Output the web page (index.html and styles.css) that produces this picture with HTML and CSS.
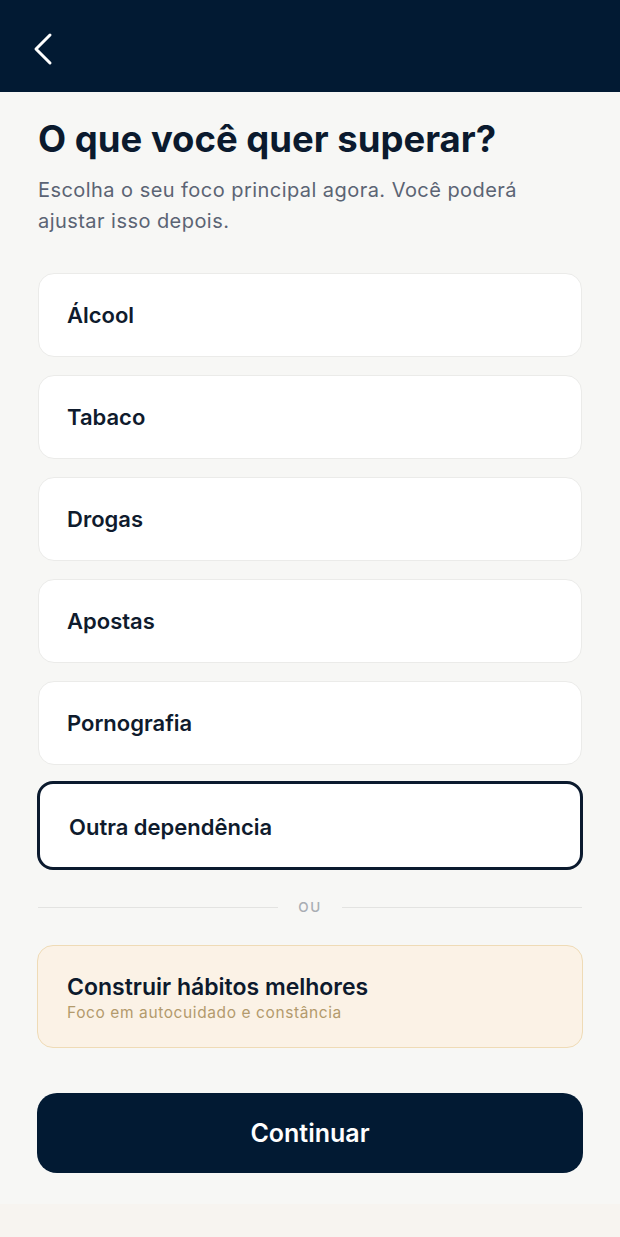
FILE: index.html
```html
<!DOCTYPE html>
<html lang="pt">
<head>
<meta charset="utf-8">
<title>O que você quer superar?</title>
<link rel="stylesheet" href="styles.css">
</head>
<body>
<header class="topbar">
  <button class="back" aria-label="Voltar">
    <svg width="24" height="34" viewBox="0 0 24 34"><path d="M18 3 L4 17 L18 31" fill="none" stroke="#fff" stroke-width="3" stroke-linecap="round" stroke-linejoin="round"/></svg>
  </button>
</header>
<main class="content">
  <h1 class="title">O que você quer superar?</h1>
  <p class="subtitle">Escolha o seu foco principal agora. Você poderá ajustar isso depois.</p>
  <div class="options">
    <div class="option">Álcool</div>
    <div class="option">Tabaco</div>
    <div class="option">Drogas</div>
    <div class="option">Apostas</div>
    <div class="option">Pornografia</div>
    <div class="option option-selected">Outra dependência</div>
  </div>
  <div class="divider"><span class="line"></span><span class="or">OU</span><span class="line"></span></div>
  <div class="habit">
    <div class="habit-title">Construir hábitos melhores</div>
    <div class="habit-sub">Foco em autocuidado e constância</div>
  </div>
  <button class="continue">Continuar</button>
</main>
<footer class="bottom"></footer>
</body>
</html>
```
FILE: styles.css
```css
* { box-sizing: border-box; }
html, body { margin: 0; padding: 0; }
body {
  background: #f7f7f5;
  font-family: Inter, "Noto Sans", sans-serif;
  color: #0d1a2d;
  width: 620px;
}
.topbar {
  height: 92px;
  background: #021a33;
  display: flex;
  align-items: center;
  padding-left: 32px;
}
.back {
  background: none;
  border: 0;
  padding: 0;
  display: flex;
  margin-top: 6px;
}
.content {
  padding: 0 37px;
  display: flex;
  flex-direction: column;
}
.title {
  margin: 25px 0 0 1px;
  font-size: 36.5px;
  line-height: 44px;
  font-weight: 700;
  color: #0b1a2e;
}
.subtitle {
  margin: 14px 0 0 1px;
  font-size: 20px;
  line-height: 31px;
  color: #5b6474;
  font-weight: 400;
  letter-spacing: 0.45px;
}
.options {
  margin-top: 36px;
  display: flex;
  flex-direction: column;
  gap: 18px;
}
.option {
  height: 84px;
  background: #fff;
  border: 1px solid #ebebe9;
  border-radius: 16px;
  padding: 0 28px;
  display: flex;
  align-items: center;
  font-size: 22px;
  font-weight: 600;
  color: #0f1b2d;
  margin: 0 1px;
}
.option-selected {
  height: 89px;
  border: 3px solid #0b1a2e;
  margin: -2px 0 0;
  padding-left: 29px;
  padding-top: 2px;
}
.divider {
  margin-top: 29px;
  display: flex;
  align-items: center;
  gap: 20px;
  padding: 0 1px;
}
.line {
  flex: 1;
  height: 1px;
  background: #e3e3e1;
}
.or {
  font-size: 13.5px;
  color: #a9adb3;
  letter-spacing: 1.5px;
  font-weight: 500;
}
.habit {
  margin-top: 30px;
  height: 103px;
  background: #fbf2e6;
  border: 1.5px solid #efdbb6;
  border-radius: 16px;
  padding: 27px 29px 0;
}
.habit-title {
  font-size: 23px;
  font-weight: 600;
  color: #0d1a2d;
  line-height: 28px;
}
.habit-sub {
  font-size: 15.5px;
  color: #b39a6c;
  line-height: 22px;
  margin-top: 1px;
  letter-spacing: 0.6px;
}
.continue {
  margin-top: 45px;
  height: 80px;
  border: 0;
  border-radius: 20px;
  background: #021a33;
  color: #fff;
  font-family: Inter, "Noto Sans", sans-serif;
  font-size: 25px;
  font-weight: 600;
  width: 100%;
}
.bottom {
  margin-top: 31px;
  height: 33px;
  background: #f7f4f0;
}
```
